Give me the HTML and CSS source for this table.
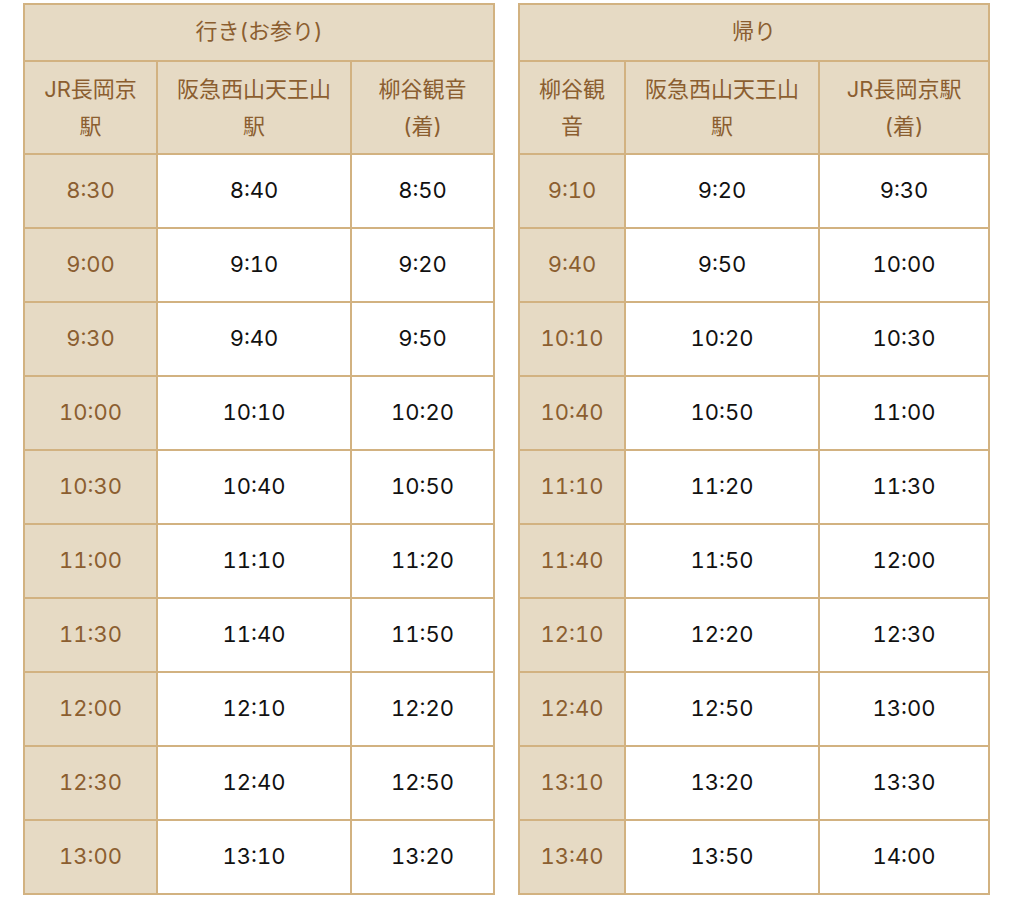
FILE: index.html
```html
<!DOCTYPE html>
<html lang="ja">
<head>
<meta charset="utf-8">
<link rel="stylesheet" href="styles.css">
</head>
<body>
<div class="wrap">
  <table class="tt">
    <colgroup><col class="c1"><col class="c2"><col class="c3"></colgroup>
    <tr class="title"><th colspan="3">行き(お参り)</th></tr>
    <tr class="head"><th>JR長岡京<br>駅</th><th>阪急西山天王山<br>駅</th><th>柳谷観音<br>(着)</th></tr>
    <tr><th>8:30</th><td>8:40</td><td>8:50</td></tr>
    <tr><th>9:00</th><td>9:10</td><td>9:20</td></tr>
    <tr><th>9:30</th><td>9:40</td><td>9:50</td></tr>
    <tr><th>10:00</th><td>10:10</td><td>10:20</td></tr>
    <tr><th>10:30</th><td>10:40</td><td>10:50</td></tr>
    <tr><th>11:00</th><td>11:10</td><td>11:20</td></tr>
    <tr><th>11:30</th><td>11:40</td><td>11:50</td></tr>
    <tr><th>12:00</th><td>12:10</td><td>12:20</td></tr>
    <tr><th>12:30</th><td>12:40</td><td>12:50</td></tr>
    <tr><th>13:00</th><td>13:10</td><td>13:20</td></tr>
  </table>
  <table class="tt">
    <colgroup><col class="d1"><col class="d2"><col class="d3"></colgroup>
    <tr class="title"><th colspan="3">帰り</th></tr>
    <tr class="head"><th>柳谷観<br>音</th><th>阪急西山天王山<br>駅</th><th>JR長岡京駅<br>(着)</th></tr>
    <tr><th>9:10</th><td>9:20</td><td>9:30</td></tr>
    <tr><th>9:40</th><td>9:50</td><td>10:00</td></tr>
    <tr><th>10:10</th><td>10:20</td><td>10:30</td></tr>
    <tr><th>10:40</th><td>10:50</td><td>11:00</td></tr>
    <tr><th>11:10</th><td>11:20</td><td>11:30</td></tr>
    <tr><th>11:40</th><td>11:50</td><td>12:00</td></tr>
    <tr><th>12:10</th><td>12:20</td><td>12:30</td></tr>
    <tr><th>12:40</th><td>12:50</td><td>13:00</td></tr>
    <tr><th>13:10</th><td>13:20</td><td>13:30</td></tr>
    <tr><th>13:40</th><td>13:50</td><td>14:00</td></tr>
  </table>
</div>
</body>
</html>
```
FILE: styles.css
```css
html, body {
  margin: 0;
  padding: 0;
  background: #ffffff;
}
body {
  font-family: Inter, "Noto Sans CJK JP", sans-serif;
  color: #111111;
}
.wrap {
  display: flex;
  gap: 23px;
  padding: 3px 0 0 23px;
}
.tt {
  width: 470px;
  flex: none;
  table-layout: fixed;
  border-collapse: collapse;
  border: 2px solid #d2b281;
}
.c1 { width: 133px; }
.c2 { width: 194px; }
.c3 { width: 143px; }
.d1 { width: 106px; }
.d2 { width: 194px; }
.d3 { width: 170px; }
.tt th, .tt td {
  border: 2px solid #d2b281;
  text-align: center;
  vertical-align: middle;
  padding: 0 0 2px;
  font-size: 22px;
  line-height: 37px;
  font-weight: normal;
  font-variant-numeric: tabular-nums;
}
.tt tr.title th {
  padding-bottom: 2px;
}
.tt tr.head th {
  padding-bottom: 0;
}
.tt th {
  background: #e6dac4;
  color: #8b5e30;
}
.tt td {
  background: #ffffff;
  color: #111111;
}
.tt tr { height: 74px; }
.tt tr.title { height: 57px; }
.tt tr.head { height: 93px; }
```
